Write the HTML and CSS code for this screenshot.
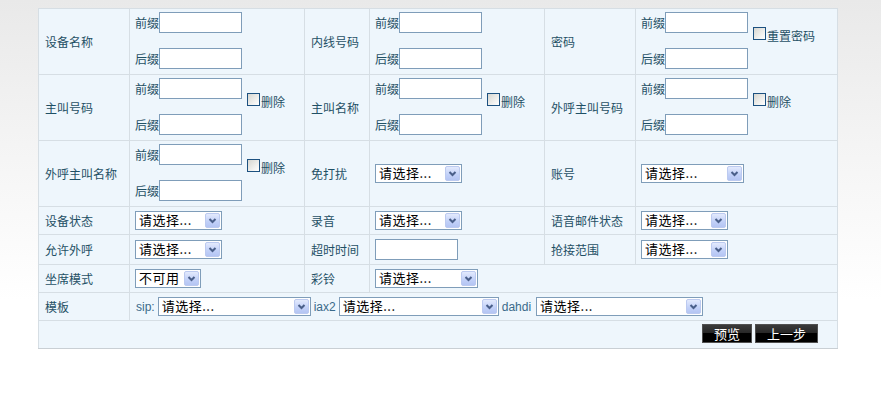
FILE: index.html
```html
<!DOCTYPE html>
<html>
<head>
<meta charset="utf-8">
<title>设备</title>
<link rel="stylesheet" href="styles.css">
</head>
<body>
<table class="form">
  <colgroup>
    <col class="c1"><col class="c2"><col class="c3"><col class="c4"><col class="c5"><col class="c6">
  </colgroup>
  <tr>
    <td class="lbl">设备名称</td>
    <td class="val tall">
      <div class="grp">
        <div class="pair">
          <div class="line"><span>前缀</span><input class="txt" type="text"></div>
          <div class="line"><span>后缀</span><input class="txt" type="text"></div>
        </div>
      </div>
    </td>
    <td class="lbl">内线号码</td>
    <td class="val tall">
      <div class="grp">
        <div class="pair">
          <div class="line"><span>前缀</span><input class="txt" type="text"></div>
          <div class="line"><span>后缀</span><input class="txt" type="text"></div>
        </div>
      </div>
    </td>
    <td class="lbl">密码</td>
    <td class="val tall">
      <div class="grp">
        <div class="pair">
          <div class="line"><span>前缀</span><input class="txt" type="text"></div>
          <div class="line"><span>后缀</span><input class="txt" type="text"></div>
        </div>
        <label class="chk"><input type="checkbox"><span>重置密码</span></label>
      </div>
    </td>
  </tr>
  <tr>
    <td class="lbl">主叫号码</td>
    <td class="val tall">
      <div class="grp">
        <div class="pair">
          <div class="line"><span>前缀</span><input class="txt" type="text"></div>
          <div class="line"><span>后缀</span><input class="txt" type="text"></div>
        </div>
        <label class="chk"><input type="checkbox"><span>删除</span></label>
      </div>
    </td>
    <td class="lbl">主叫名称</td>
    <td class="val tall">
      <div class="grp">
        <div class="pair">
          <div class="line"><span>前缀</span><input class="txt" type="text"></div>
          <div class="line"><span>后缀</span><input class="txt" type="text"></div>
        </div>
        <label class="chk"><input type="checkbox"><span>删除</span></label>
      </div>
    </td>
    <td class="lbl">外呼主叫号码</td>
    <td class="val tall">
      <div class="grp">
        <div class="pair">
          <div class="line"><span>前缀</span><input class="txt" type="text"></div>
          <div class="line"><span>后缀</span><input class="txt" type="text"></div>
        </div>
        <label class="chk"><input type="checkbox"><span>删除</span></label>
      </div>
    </td>
  </tr>
  <tr>
    <td class="lbl">外呼主叫名称</td>
    <td class="val tall">
      <div class="grp">
        <div class="pair">
          <div class="line"><span>前缀</span><input class="txt" type="text"></div>
          <div class="line"><span>后缀</span><input class="txt" type="text"></div>
        </div>
        <label class="chk"><input type="checkbox"><span>删除</span></label>
      </div>
    </td>
    <td class="lbl">免打扰</td>
    <td class="val">
      <span class="sel w87"><select><option>请选择...</option></select><span class="arr"><svg width="13" height="13" viewBox="0 0 13 13"><polyline points="3.5,5 6.5,8 9.5,5" fill="none" stroke="#4a5f8a" stroke-width="2"/></svg></span></span>
    </td>
    <td class="lbl">账号</td>
    <td class="val">
      <span class="sel w103"><select><option>请选择...</option></select><span class="arr"><svg width="13" height="13" viewBox="0 0 13 13"><polyline points="3.5,5 6.5,8 9.5,5" fill="none" stroke="#4a5f8a" stroke-width="2"/></svg></span></span>
    </td>
  </tr>
  <tr>
    <td class="lbl">设备状态</td>
    <td class="val">
      <span class="sel w87"><select><option>请选择...</option></select><span class="arr"><svg width="13" height="13" viewBox="0 0 13 13"><polyline points="3.5,5 6.5,8 9.5,5" fill="none" stroke="#4a5f8a" stroke-width="2"/></svg></span></span>
    </td>
    <td class="lbl">录音</td>
    <td class="val">
      <span class="sel w87"><select><option>请选择...</option></select><span class="arr"><svg width="13" height="13" viewBox="0 0 13 13"><polyline points="3.5,5 6.5,8 9.5,5" fill="none" stroke="#4a5f8a" stroke-width="2"/></svg></span></span>
    </td>
    <td class="lbl">语音邮件状态</td>
    <td class="val">
      <span class="sel w87"><select><option>请选择...</option></select><span class="arr"><svg width="13" height="13" viewBox="0 0 13 13"><polyline points="3.5,5 6.5,8 9.5,5" fill="none" stroke="#4a5f8a" stroke-width="2"/></svg></span></span>
    </td>
  </tr>
  <tr>
    <td class="lbl">允许外呼</td>
    <td class="val">
      <span class="sel w87"><select><option>请选择...</option></select><span class="arr"><svg width="13" height="13" viewBox="0 0 13 13"><polyline points="3.5,5 6.5,8 9.5,5" fill="none" stroke="#4a5f8a" stroke-width="2"/></svg></span></span>
    </td>
    <td class="lbl">超时时间</td>
    <td class="val"><input class="txt" type="text"></td>
    <td class="lbl">抢接范围</td>
    <td class="val">
      <span class="sel w87"><select><option>请选择...</option></select><span class="arr"><svg width="13" height="13" viewBox="0 0 13 13"><polyline points="3.5,5 6.5,8 9.5,5" fill="none" stroke="#4a5f8a" stroke-width="2"/></svg></span></span>
    </td>
  </tr>
  <tr>
    <td class="lbl">坐席模式</td>
    <td class="val">
      <span class="sel w66"><select><option>不可用</option></select><span class="arr"><svg width="13" height="13" viewBox="0 0 13 13"><polyline points="3.5,5 6.5,8 9.5,5" fill="none" stroke="#4a5f8a" stroke-width="2"/></svg></span></span>
    </td>
    <td class="lbl">彩铃</td>
    <td class="val" colspan="3">
      <span class="sel w103"><select><option>请选择...</option></select><span class="arr"><svg width="13" height="13" viewBox="0 0 13 13"><polyline points="3.5,5 6.5,8 9.5,5" fill="none" stroke="#4a5f8a" stroke-width="2"/></svg></span></span>
    </td>
  </tr>
  <tr>
    <td class="lbl">模板</td>
    <td class="val tplcell" colspan="5">
      <div class="tpl">
        <span class="proto">sip:</span>
        <span class="sel w153"><select><option>请选择...</option></select><span class="arr"><svg width="13" height="13" viewBox="0 0 13 13"><polyline points="3.5,5 6.5,8 9.5,5" fill="none" stroke="#4a5f8a" stroke-width="2"/></svg></span></span>
        <span class="proto">iax2</span>
        <span class="sel w160"><select><option>请选择...</option></select><span class="arr"><svg width="13" height="13" viewBox="0 0 13 13"><polyline points="3.5,5 6.5,8 9.5,5" fill="none" stroke="#4a5f8a" stroke-width="2"/></svg></span></span>
        <span class="proto last">dahdi</span>
        <span class="sel w167"><select><option>请选择...</option></select><span class="arr"><svg width="13" height="13" viewBox="0 0 13 13"><polyline points="3.5,5 6.5,8 9.5,5" fill="none" stroke="#4a5f8a" stroke-width="2"/></svg></span></span>
      </div>
    </td>
  </tr>
  <tr>
    <td class="actions" colspan="6">
      <div class="btns">
        <button class="btn" type="button">预览</button>
        <button class="btn" type="button">上一步</button>
      </div>
    </td>
  </tr>
</table>
</body>
</html>
```
FILE: styles.css
```css
html {
  background: #ffffff linear-gradient(#e9e9e9 0px, #f3f3f3 130px, #ffffff 300px) no-repeat;
  min-height: 100%;
}
body {
  margin: 8px 8px 8px 38px;
  font-family: "Noto Sans CJK SC", "Noto Sans", sans-serif;
  font-size: 12px;
  color: #1f5065;
}
.form {
  border-collapse: collapse;
  table-layout: fixed;
  width: 799px;
  background: #eef6fc;
}
.form td {
  border: 1px solid #d6dee4;
  padding: 4px 5px;
  vertical-align: middle;
  line-height: 16px;
}
.form tr:last-child td {
  border-bottom-color: #c9cfd4;
}
.c1 { width: 91px; }
.c2 { width: 175px; }
.c3 { width: 65px; }
.c4 { width: 175px; }
.c5 { width: 91px; }
.c6 { width: 202px; }

.form td.lbl { padding-left: 6px; white-space: nowrap; }
.form td.tall { padding: 3px 5px 5px; }
.form td.tplcell { padding-left: 6px; }

.grp {
  display: flex;
  align-items: flex-start;
}
.pair {
  display: flex;
  flex-direction: column;
  gap: 15px;
}
.line {
  display: flex;
  align-items: center;
}
.txt {
  box-sizing: border-box;
  width: 83px;
  height: 21px;
  border: 1px solid #7f9db9;
  background: #fff;
  margin: 0;
  padding: 0 2px;
  display: block;
}
.chk {
  display: flex;
  align-items: flex-end;
  margin: 15px 0 0 5px;
  white-space: nowrap;
}
.chk input {
  appearance: none;
  -webkit-appearance: none;
  box-sizing: border-box;
  width: 13px;
  height: 13px;
  margin: 0 1px 0 0;
  border: 1px solid #1c5180;
  background: linear-gradient(135deg, #d6d6d0 0%, #f4f4f2 70%, #ffffff 100%);
}
.chk span {
  line-height: 12px;
  margin-bottom: -2px;
}

.sel {
  position: relative;
  display: inline-block;
  vertical-align: middle;
  height: 19px;
}
.sel select {
  appearance: none;
  -webkit-appearance: none;
  box-sizing: border-box;
  width: 100%;
  height: 19px;
  margin: 0;
  border: 1px solid #7f9db9;
  border-radius: 0;
  background: #fff;
  color: #000;
  font-family: "Noto Sans CJK SC", sans-serif;
  font-size: 13px;
  letter-spacing: 0.5px;
  line-height: 15px;
  padding: 0 0 2px 3px;
  display: block;
}
.sel .arr {
  position: absolute;
  right: 2px;
  top: 2px;
  width: 15px;
  height: 15px;
  box-sizing: border-box;
  border: 1px solid #bccaf0;
  border-radius: 2px;
  background: linear-gradient(#e3eafd, #c1d0f8 60%, #b4c5f3);
  display: flex;
  align-items: center;
  justify-content: center;
  pointer-events: none;
}
.sel .arr svg { display: block; }
.w66 { width: 66px; }
.w87 { width: 87px; }
.w103 { width: 103px; }
.w153 { width: 153px; }
.w160 { width: 160px; }
.w167 { width: 167px; }

.tpl {
  display: flex;
  align-items: center;
  gap: 3px;
}
.proto {
  font-family: "Liberation Sans", Arial, sans-serif;
  font-size: 12px;
  color: #3a6a8a;
}
.proto.last { margin-right: 2px; }

.form td.actions {
  padding: 3px 19px 5px 5px;
}
.btns {
  display: flex;
  justify-content: flex-end;
  gap: 3px;
}
.btn {
  box-sizing: border-box;
  height: 19px;
  margin: 0;
  padding: 0 11px;
  border: 1px solid #505050;
  background: linear-gradient(#3a3a3a 0%, #262626 50%, #000 50%, #000 100%);
  color: #fff;
  font-family: "Noto Sans CJK SC", sans-serif;
  font-size: 13px;
  line-height: 17px;
  cursor: pointer;
}
```
